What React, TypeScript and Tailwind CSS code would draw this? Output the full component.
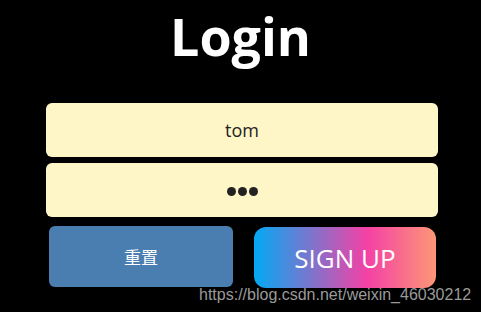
import React from "react";

export default function App() {
  return (
    <div className="relative w-[481px] h-[312px] bg-black overflow-hidden" style={{ fontFamily: '"Open Sans", "Noto Sans", "Noto Sans CJK SC", sans-serif' }}>
      <div className="flex flex-col items-center pt-[2px]">
        <h1 className="text-[52px] leading-[68px] font-bold text-white">Login</h1>
      </div>
      <div className="flex flex-col gap-[6px] pl-[46px] mt-[33px]">
        <input
          readOnly
          value="tom"
          className="w-[392px] h-[54px] rounded-[6px] bg-[#fff6c8] text-center text-[18px] text-[#222] outline-none"
        />
        <div className="w-[392px] h-[54px] rounded-[6px] bg-[#fff6c8] flex items-center justify-center gap-[2px] pt-[2px]">
          <span className="w-[9px] h-[9px] rounded-full bg-[#222]" />
          <span className="w-[9px] h-[9px] rounded-full bg-[#222]" />
          <span className="w-[9px] h-[9px] rounded-full bg-[#222]" />
        </div>
      </div>
      <div className="flex items-start pl-[49px] mt-[9px] gap-[21px]">
        <button className="w-[184px] h-[61px] rounded-[6px] bg-[#4a7eb0] text-white text-[17px]" style={{ fontFamily: '"Noto Sans CJK SC", sans-serif' }}>
          重置
        </button>
        <button className="mt-[1px] w-[182px] h-[61px] rounded-[12px] bg-[linear-gradient(90deg,#03a9f4_0%,#f441a5_62%,#fd9676_100%)] text-white text-[26px] leading-none">
          SIGN UP
        </button>
      </div>
      <div className="absolute left-[199px] top-[283px] text-[16px] text-[#9a9a9a] whitespace-nowrap" style={{ fontFamily: '"Liberation Sans", Arial, sans-serif' }}>
        https://blog.csdn.net/weixin_46030212
      </div>
    </div>
  );
}
